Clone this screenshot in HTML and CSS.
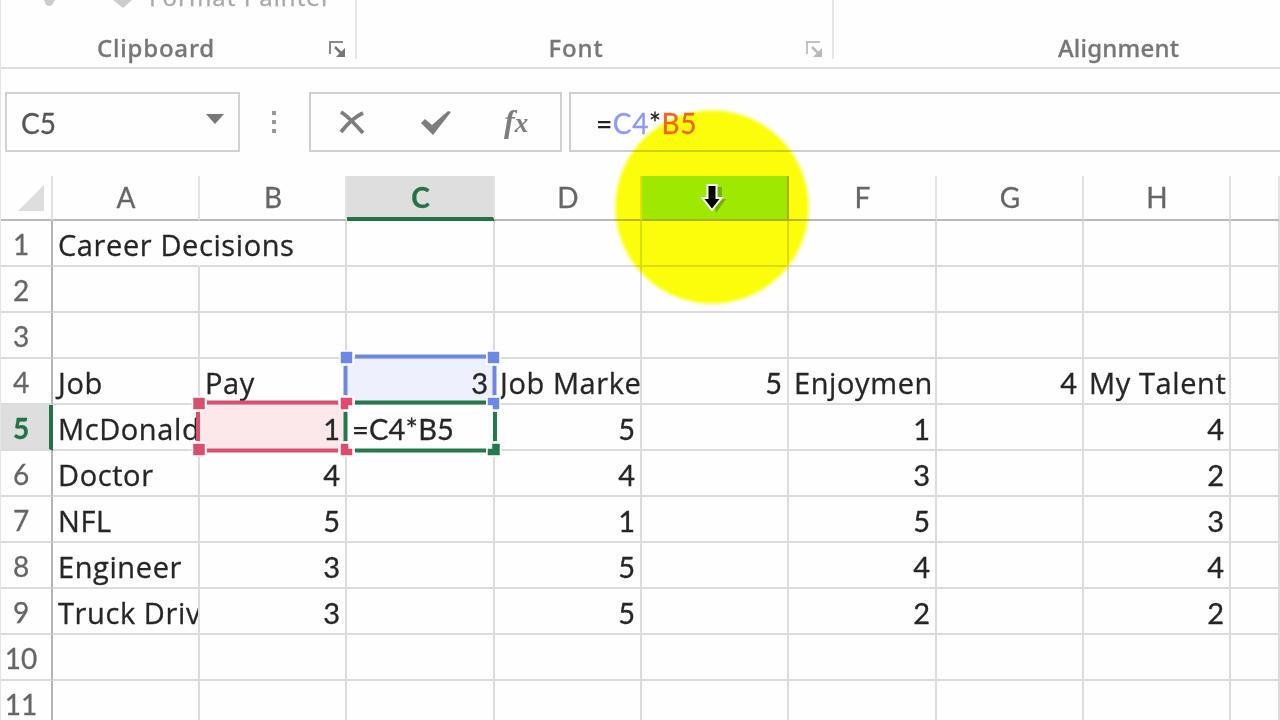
FILE: index.html
```html
<!DOCTYPE html>
<html lang="en">
<head>
<meta charset="utf-8">
<title>Career Decisions</title>
<link rel="stylesheet" href="styles.css">
</head>
<body>
<div class="app">
  <header class="ribbon">
    <section class="group clipboard">
      <div class="cut-row">
        <svg class="brush" width="104" height="10" viewBox="0 0 104 10"><path d="M3 0h11l-3 5q-3 2-6 0z" fill="#ccc"/><path d="M72 0h19l-9 8z" fill="#ccc"/></svg>
        <span class="painter">Format Painter</span>
      </div>
      <span class="label">Clipboard</span>
      <svg class="launcher" width="18" height="18" viewBox="0 0 18 18"><path d="M2 14V2h13" fill="none" stroke="#888" stroke-width="2"/><path d="M7 7l6 6" stroke="#777" stroke-width="2.5"/><path d="M17 8v9H8z" fill="#777"/></svg>
    </section>
    <section class="group font">
      <span class="label">Font</span>
      <svg class="launcher faded" width="18" height="18" viewBox="0 0 18 18"><path d="M2 14V2h13" fill="none" stroke="#888" stroke-width="2"/><path d="M7 7l6 6" stroke="#777" stroke-width="2.5"/><path d="M17 8v9H8z" fill="#777"/></svg>
    </section>
    <section class="group alignment"><span class="label">Alignment</span></section>
  </header>

  <div class="formula-bar">
    <div class="name-box"><span>C5</span><svg width="18" height="10" viewBox="0 0 18 10"><path d="M0 0h18l-9 10z" fill="#777"/></svg></div>
    <svg class="dots" width="6" height="26" viewBox="0 0 6 26"><path d="M1 2h4v4H1zM1 11h4v4H1zM1 20h4v4H1z" fill="#999"/></svg>
    <div class="actions">
      <svg width="28" height="26" viewBox="0 0 28 26"><path d="M3 3q8 5 22 21M25 4Q14 9 3 23" fill="none" stroke="#7d7d7d" stroke-width="3.8"/></svg>
      <svg width="32" height="26" viewBox="0 0 32 26"><path d="M1 14l4-4 7 6L28 2l3 1L13 26z" fill="#7d7d7d"/></svg>
      <span class="fx">f<span class="fx-x">x</span></span>
    </div>
    <div class="formula"><span class="formula-text">=<span class="ref-blue">C4</span>*<span class="ref-red">B5</span></span></div>
  </div>

  <main class="sheet">
    <div class="row head">
      <div class="corner"><svg width="26" height="26" viewBox="0 0 26 26"><path d="M26 0v26H0z" fill="#dedede"/></svg></div>
      <div class="col">A</div><div class="col">B</div><div class="col active">C</div><div class="col">D</div><div class="col hover"></div><div class="col">F</div><div class="col">G</div><div class="col">H</div><div class="col"></div>
    </div>
    <div class="row"><div class="num">1</div><div class="cell spill">Career Decisions</div><div class="cell"></div><div class="cell"></div><div class="cell"></div><div class="cell"></div><div class="cell"></div><div class="cell"></div><div class="cell"></div><div class="cell"></div></div>
    <div class="row"><div class="num">2</div><div class="cell"></div><div class="cell"></div><div class="cell"></div><div class="cell"></div><div class="cell"></div><div class="cell"></div><div class="cell"></div><div class="cell"></div><div class="cell"></div></div>
    <div class="row"><div class="num">3</div><div class="cell"></div><div class="cell"></div><div class="cell"></div><div class="cell"></div><div class="cell"></div><div class="cell"></div><div class="cell"></div><div class="cell"></div><div class="cell"></div></div>
    <div class="row"><div class="num">4</div><div class="cell">Job</div><div class="cell">Pay</div><div class="cell value blue">3</div><div class="cell">Job Marke</div><div class="cell value">5</div><div class="cell">Enjoymen</div><div class="cell value">4</div><div class="cell">My Talent</div><div class="cell"></div></div>
    <div class="row"><div class="num active">5</div><div class="cell">McDonald</div><div class="cell value red">1</div><div class="cell edit">=C4*B5</div><div class="cell value">5</div><div class="cell"></div><div class="cell value">1</div><div class="cell"></div><div class="cell value">4</div><div class="cell"></div></div>
    <div class="row"><div class="num">6</div><div class="cell">Doctor</div><div class="cell value">4</div><div class="cell"></div><div class="cell value">4</div><div class="cell"></div><div class="cell value">3</div><div class="cell"></div><div class="cell value">2</div><div class="cell"></div></div>
    <div class="row"><div class="num">7</div><div class="cell">NFL</div><div class="cell value">5</div><div class="cell"></div><div class="cell value">1</div><div class="cell"></div><div class="cell value">5</div><div class="cell"></div><div class="cell value">3</div><div class="cell"></div></div>
    <div class="row"><div class="num">8</div><div class="cell">Engineer</div><div class="cell value">3</div><div class="cell"></div><div class="cell value">5</div><div class="cell"></div><div class="cell value">4</div><div class="cell"></div><div class="cell value">4</div><div class="cell"></div></div>
    <div class="row"><div class="num">9</div><div class="cell">Truck Driv</div><div class="cell value">3</div><div class="cell"></div><div class="cell value">5</div><div class="cell"></div><div class="cell value">2</div><div class="cell"></div><div class="cell value">2</div><div class="cell"></div></div>
    <div class="row"><div class="num">10</div><div class="cell"></div><div class="cell"></div><div class="cell"></div><div class="cell"></div><div class="cell"></div><div class="cell"></div><div class="cell"></div><div class="cell"></div><div class="cell"></div></div>
    <div class="row"><div class="num">11</div><div class="cell"></div><div class="cell"></div><div class="cell"></div><div class="cell"></div><div class="cell"></div><div class="cell"></div><div class="cell"></div><div class="cell"></div><div class="cell"></div></div>

    <svg class="selection" width="312" height="108" viewBox="190 350 312 108">
      <path d="M207 402.500H338M207 450.500H338M198 412V441" stroke="#d9506e" stroke-width="4"/>
      <path d="M355 356.500H486M345.500 366V395M494.500 366V395" stroke="#6c88e4" stroke-width="4"/>
      <path d="M355 402.500H486M355 450.500H486M345.500 412V441M495 412V441" stroke="#24794c" stroke-width="4"/>
      <g stroke="#fff" stroke-width="1.500">
        <path d="M192.500 397h13v13h-13zM192.500 443h13v13h-13z" fill="#d9506e"/>
        <path d="M340 397h13v9h-4v4h-9zM340 443h9v5h4v8h-13z" fill="#e04a6c"/>
        <path d="M340 351h13v13h-13zM487 351h13v13h-13zM487 397h13v13h-8v-4h-5z" fill="#6c88e4"/>
        <path d="M491.500 443h9v13h-13.500v-8h4.500z" fill="#24794c"/>
      </g>
    </svg>
  </main>
  <div class="spotlight"></div>
  <svg class="pointer" width="30" height="34" viewBox="0 0 30 34"><path d="M12 4h11v12h4L17 30z" fill="#376000" opacity=".4"/><path d="M8.500 2h9v13h5L13 27 3.500 15h5z" fill="#000" stroke="#fff" stroke-width="2"/></svg>
</div>
</body>
</html>
```
FILE: styles.css
```css
* { box-sizing: border-box; }
body { margin: 0; background: #fff; }
.app { position: relative; width: 1280px; height: 720px; overflow: hidden; background: #fefefe; font-family: "Open Sans", "Noto Sans", sans-serif; border-left: 1px solid #e4e4e4; -webkit-text-stroke: .3px; }

.ribbon { display: flex; height: 69px; margin-left: -1px; border-bottom: 2px solid #dedede; }
.group { position: relative; flex: none; display: flex; justify-content: center; align-items: flex-end; height: 59px; border-right: 2px solid #e6e6e6; }
.clipboard { width: 357px; padding-right: 43px; }
.font { width: 477px; padding-right: 37px; }
.alignment { width: 569px; border-right: 0; }
.label { font: 500 24px/22px "Noto Sans", sans-serif; color: #777; height: 22px; white-space: nowrap; letter-spacing: .2px; }
.clipboard .label, .font .label { letter-spacing: .8px; }
.cut-row { position: absolute; left: 41px; top: 0; display: flex; height: 14px; overflow: hidden; }
.painter { margin: -19px 0 0 4px; font: 24px/32px "Noto Sans", sans-serif; letter-spacing: 1px; color: #aaa; white-space: nowrap; }
.launcher { position: absolute; right: 9px; top: 40px; }
.faded { opacity: .5; }

.formula-bar { display: flex; align-items: center; height: 60px; margin-top: 23px; }
.name-box { display: flex; align-items: center; justify-content: space-between; width: 235px; height: 60px; margin-left: 4px; padding: 2px 14px 0 14px; border: 2px solid #d2d2d2; font: 28px "Lato", sans-serif; color: #555; }
.name-box svg { margin-top: -8px; }
.dots { margin-left: 31px; }
.actions { display: flex; align-items: center; width: 253px; height: 60px; margin-left: 32px; padding-left: 27px; border: 2px solid #d2cfcf; }
.actions svg + svg { margin-left: 54px; }
.fx { margin-left: 52px; font: italic bold 32px/34px "Liberation Serif", serif; color: #7d7d7d; -webkit-text-stroke: 0; }
.fx-x { font-size: 27px; }
.formula { flex: 1; display: flex; align-items: center; height: 60px; margin-left: 7px; padding: 2px 0 0 25px; border: 2px solid #d2cfcf; border-right: 0; font: 28px "Lato", sans-serif; letter-spacing: .6px; color: #222; }
.formula-text { position: relative; z-index: 3; }
.ref-blue { color: #8c98fa; }
.ref-red { color: #ee6420; }

.sheet { position: relative; margin: 24px 0 0 -1px; }
.row { display: grid; grid-template-columns: 53px 147px 147px 148px 147px 147px 148px 147px 147px 49px; grid-template-rows: 100%; height: 46px; }
.head { height: 45px; }
.corner, .col { border-bottom: 2px solid #b9b9b9; border-right: 2px solid #e2e2e2; }
.corner { display: flex; justify-content: flex-end; padding: 9px 7px 0 0; }
.col, .num { display: flex; align-items: center; justify-content: center; font: 28px "Lato", sans-serif; color: #666; }
.col { padding: 0 0 2px 1px; }
.col.active { background: #dedede; color: #217346; font-weight: 700; border-bottom: 4px solid #217346; padding-bottom: 0; }
.col.hover { background: #a0e80c; border-color: #b0b010; }
.num { padding: 2px 9px 0 0; border-right: 2px solid #b4b4b4; border-bottom: 2px solid #dcdcdc; }
.num.active { background: #dedede; color: #217346; font-weight: 700; border-right: 4px solid #217346; padding-right: 7px; }
.cell { padding-left: 5px; overflow: hidden; white-space: nowrap; font-size: 29px; letter-spacing: .6px; line-height: 47px; color: #262626; border-right: 2px solid #dcdcdc; border-bottom: 2px solid #dcdcdc; }
.spill { overflow: visible; border-right-color: transparent; }
.value { padding: 0 5px 0 0; text-align: right; font-family: "Lato", sans-serif; font-size: 29px; letter-spacing: 0; }
.blue { background: #eef0fd; }
.red { background: #fce8ea; }
.edit { font-family: "Lato", sans-serif; letter-spacing: .2px; }

.selection { position: absolute; left: 190px; top: 174px; }
.spotlight { position: absolute; z-index: 1; left: 612px; top: 108px; width: 198px; height: 198px; border-radius: 50%; background: radial-gradient(circle closest-side, #fcff08 95%, #ffff0800 100%); mix-blend-mode: multiply; }
.pointer { position: absolute; z-index: 2; left: 698px; top: 183px; }
```
